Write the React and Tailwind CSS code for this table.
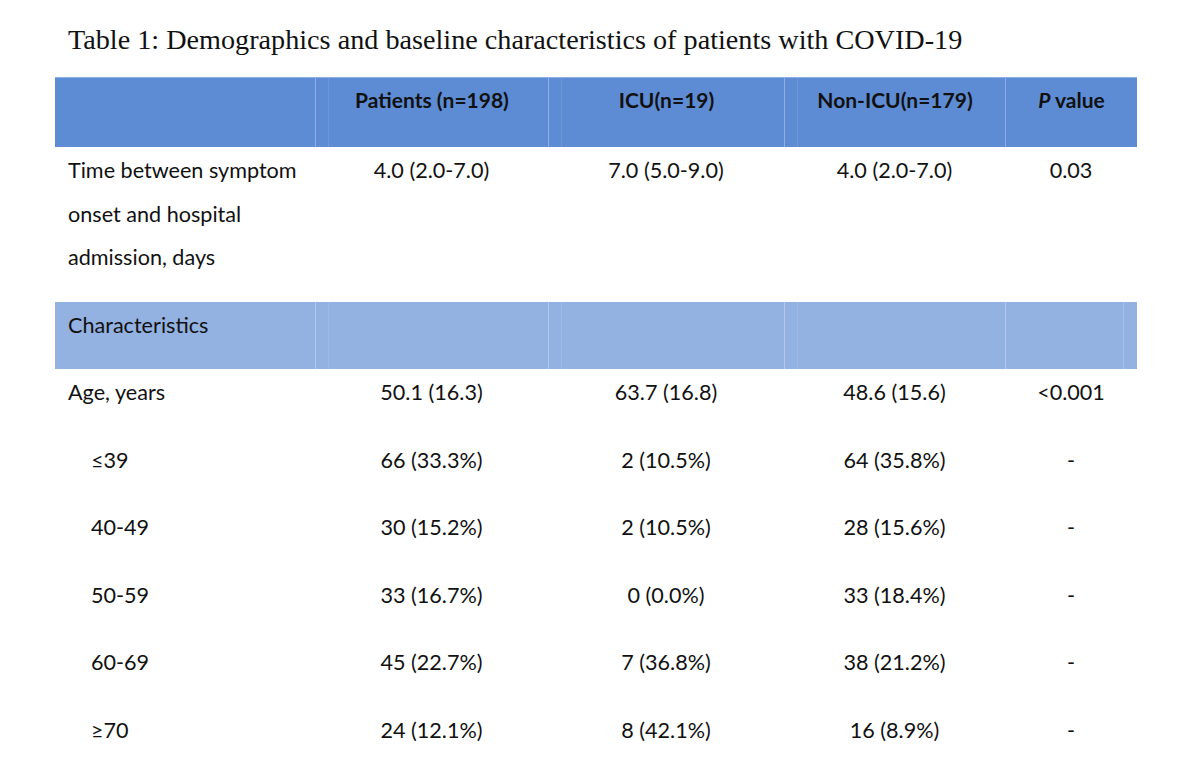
const cols = 'grid grid-cols-[260px_233px_236px_221px_132px]';

const rows = [
  { label: 'Age, years', vals: ['50.1 (16.3)', '63.7 (16.8)', '48.6 (15.6)', '<0.001'] },
  { label: '≤39', sub: true, vals: ['66 (33.3%)', '2 (10.5%)', '64 (35.8%)', '-'] },
  { label: '40-49', sub: true, vals: ['30 (15.2%)', '2 (10.5%)', '28 (15.6%)', '-'] },
  { label: '50-59', sub: true, vals: ['33 (16.7%)', '0 (0.0%)', '33 (18.4%)', '-'] },
  { label: '60-69', sub: true, vals: ['45 (22.7%)', '7 (36.8%)', '38 (21.2%)', '-'] },
  { label: '≥70', sub: true, vals: ['24 (12.1%)', '8 (42.1%)', '16 (8.9%)', '-'] },
];

// light divider used inside the blue bands (main line + faint second line)
const BandCell = ({ children, first, last, className = '' }) => (
  <div className={`relative ${first ? '' : 'border-l border-white/30'} ${className}`}>
    {!first && !last && <div className="absolute top-0 bottom-0 left-[12px] w-px bg-white/10"></div>}
    {children}
  </div>
);

const App = () => {
  return (
    <div className="w-[1200px] h-[762px] overflow-hidden bg-white text-[#111]">
      <h1 className="pl-[68px] pt-[22px] h-[77px] text-[28.2px] leading-[36px] font-['Liberation_Serif',serif] font-normal">
        Table 1: Demographics and baseline characteristics of patients with COVID-19
      </h1>

      <div className="ml-[55px] w-[1082px] font-['Lato','Open_Sans',sans-serif] text-[21.6px] leading-[43.5px]">
        {/* Header */}
        <div className={`${cols} h-[70px] bg-[#5d8cd4] border-t border-[#8aaee6] font-bold text-[21px] text-center`}>
          <BandCell first />
          <BandCell>Patients (n=198)</BandCell>
          <BandCell>ICU(n=19)</BandCell>
          <BandCell>Non-ICU(n=179)</BandCell>
          <BandCell last>
            <span className="italic">P</span> value
          </BandCell>
        </div>

        {/* Time to admission */}
        <div className={`${cols} pt-[2px] pb-[22px]`}>
          <div className="pl-[13px]">
            Time between symptom
            <br />
            onset and hospital
            <br />
            admission, days
          </div>
          <div className="text-center">4.0 (2.0-7.0)</div>
          <div className="text-center">7.0 (5.0-9.0)</div>
          <div className="text-center">4.0 (2.0-7.0)</div>
          <div className="text-center">0.03</div>
        </div>

        {/* Characteristics band */}
        <div className={`${cols} h-[67px] bg-[#93b1e1]`}>
          <BandCell first className="pl-[13px] pt-[2px]">Characteristics</BandCell>
          <BandCell />
          <BandCell />
          <BandCell />
          <BandCell last>
            <div className="absolute top-0 bottom-0 right-[13px] w-px bg-white/20"></div>
          </BandCell>
        </div>

        {rows.map((r) => (
          <div key={r.label} className={`${cols} h-[67.6px] pt-[2.5px]`}>
            <div className={r.sub ? 'pl-[36px]' : 'pl-[13px]'}>{r.label}</div>
            {r.vals.map((v, i) => (
              <div key={i} className="text-center">
                {v}
              </div>
            ))}
          </div>
        ))}
      </div>
    </div>
  );
};

export default App;
